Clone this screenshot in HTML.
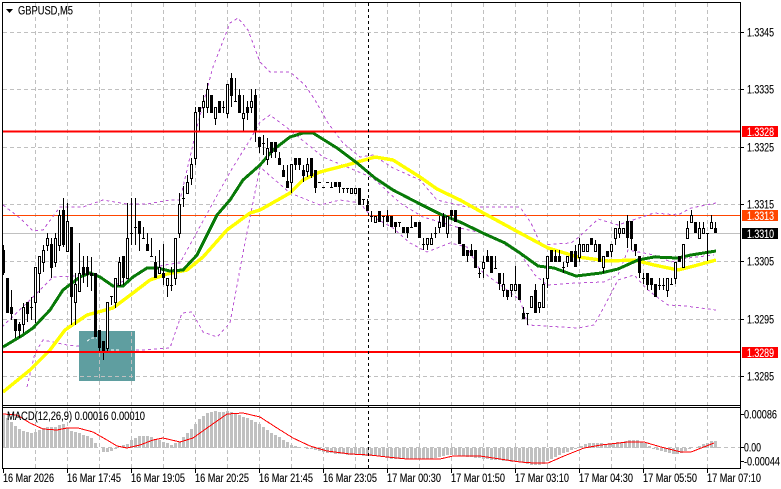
<!DOCTYPE html>
<html><head><meta charset="utf-8"><title>GBPUSD,M5</title>
<style>
html,body{margin:0;padding:0;background:#fff;width:781px;height:489px;overflow:hidden}
svg{display:block}
text{font-family:"Liberation Sans",sans-serif;font-size:11.5px;fill:#000;stroke:#000;stroke-width:.12px}
.w{fill:#fff;stroke:#fff}
.c{shape-rendering:crispEdges}
</style></head><body>
<svg width="781" height="489" viewBox="0 0 781 489" xmlns="http://www.w3.org/2000/svg">
<rect width="781" height="489" fill="#fff"/>
<rect class="c" x="79" y="331" width="56" height="50" fill="#5f9ea0"/>
<!-- grid -->
<g class="c" fill="none" stroke="#c0c0c0" stroke-dasharray="4 3">
<path d="M3 32.5H740M3 89.5H740M3 147.5H740M3 204.5H740M3 261.5H740M3 319.5H740M3 376.5H740M3 447.5H740"/>
<path d="M35.5 3V405M67.5 3V405M99.5 3V405M131.5 3V405M163.5 3V405M195.5 3V405M227.5 3V405M259.5 3V405M291.5 3V405M323.5 3V405M355.5 3V405M387.5 3V405M419.5 3V405M451.5 3V405M483.5 3V405M515.5 3V405M547.5 3V405M579.5 3V405M611.5 3V405M643.5 3V405M675.5 3V405M707.5 3V405"/>
<path d="M35.5 408V468M67.5 408V468M99.5 408V468M131.5 408V468M163.5 408V468M195.5 408V468M227.5 408V468M259.5 408V468M291.5 408V468M323.5 408V468M355.5 408V468M387.5 408V468M419.5 408V468M451.5 408V468M483.5 408V468M515.5 408V468M547.5 408V468M579.5 408V468M611.5 408V468M643.5 408V468M675.5 408V468M707.5 408V468"/>
</g>
<path class="c" d="M3 233.5H740" stroke="#c0c0c0" fill="none"/>
<path class="c" d="M3 215.5H740" stroke="#ff4500" fill="none"/>
<!-- bollinger -->
<g fill="none" stroke="#ba55d3" stroke-dasharray="3 3" class="c">
<path d="M3 205L20 218L33 231L43 230L60 207L83 207L103 200L127 204L147 204L170 200L180 200L197 127L213 67L230 23L238 18L248 30L260 62L270 72L290 72L305 85L315 100L328 123L343 143L360 157L373 155L393 168L420 180L437 200L467 207L520 207L531 223L541 245L571 243L579 237L598 219L618 225L624 223L654 213L678 215L691 208L716 203"/>
<path d="M2 327L33 297L53 277L77 276L95 273L113 285L127 280L150 268L170 264L180 263L220 190L233 167L250 140L260 122L270 115L290 130L323 157L347 167L373 178L400 203L423 217L460 228L490 235L521 255L535 275L547 285L576 283L604 282L618 275L628 250L654 255L671 262L688 258L714 255"/>
<path d="M27 387L35 353L43 340L67 345L79 346M136 350L143 350L170 348L182 313L192 312L203 332L217 337L230 323L243 253L260 167L290 193L320 205L340 200L360 203L370 215L393 228L410 243L427 252L450 243L467 247L480 270L503 287L520 300L528 325L578 328L594 325L604 307L618 280L634 275L648 290L661 300L668 305L685 306L716 310"/>
</g>
<path class="c" d="M87 341L92 338L97 338M111 350L121 350" fill="none" stroke="#fff" stroke-dasharray="3 2"/>
<!-- moving averages -->
<g fill="none" stroke-linejoin="round" class="c">
<polyline stroke="#ffff00" stroke-width="3.4" points="3,392 30,370 50,350 65,330 87,315 113,308 133,293 150,280 167,274 187,270 203,257 227,230 250,213 260,210 290,193 303,180 320,172 347,165 375,157 393,160 420,177 437,189 460,200 487,215 520,233 548,248 578,257 608,261 634,260 654,265 678,270 694,266 716,260"/>
<polyline stroke="#087a08" stroke-width="3" points="3,347 13,341 23,335 33,328 50,310 63,290 80,277 90,273 100,277 113,286 123,286 133,277 147,268 157,268 170,271 183,270 197,255 217,215 230,200 243,180 260,165 273,150 290,137 303,133 313,133 337,148 357,163 375,178 393,190 420,204 440,214 460,222 487,235 505,243 520,253 538,266 554,268 576,276 601,273 618,269 638,260 654,257 678,258 691,255 716,251"/>
</g>
<!-- candle wicks & dojis -->
<path class="c" fill="none" stroke="#000" d="M3.5 245V275M7.5 278V313M11.5 290V320M15.5 319V338M19.5 322V338M23.5 303V333M27.5 302V322M31.5 297V320M35.5 267V323M39.5 256V293M43.5 245V272M47.5 233V251M51.5 238V278M55.5 233V267M59.5 210V251M63.5 198V247M67.5 203V251M71.5 227V325M75.5 273V325M79.5 243V292M83.5 256V283M87.5 256V287M91.5 257V291M95.5 273V337M99.5 330V353M103.5 341V360M107.5 302V353M111.5 296V305M115.5 278V308M119.5 257V285M123.5 256V285M127.5 203V278M131.5 198V245M135.5 198V245M139.5 221V251M143.5 227V238M147.5 233V251M151.5 238V256M155.5 256V278M159.5 250V273M163.5 244V285M167.5 278V297M171.5 267V291M175.5 238V285M179.5 193V238M183.5 186V207M187.5 175V193M191.5 158V185M195.5 107V165M199.5 107V131M203.5 95V118M207.5 83V113M211.5 95V113M215.5 107V125M219.5 101V113M223.5 101V113M227.5 84V118M231.5 73V107M235.5 78V101M239.5 89V113M243.5 95V131M247.5 101V120M251.5 89V113M255.5 89V142M259.5 137V153M263.5 135V155M267.5 138V165M271.5 142V158M275.5 142V158M279.5 152V165M283.5 165V177M287.5 165V188M291.5 164V193M295.5 158V170M299.5 158V170M303.5 165V182M307.5 158V177M311.5 158V178M315.5 170V193M331.5 182V187M339.5 182V193M343.5 188V193M347.5 188V193M351.5 188V193M355.5 188V193M359.5 188V205M363.5 199V205M367.5 199V211M371.5 211V222M375.5 216V222M379.5 211V222M383.5 216V227M387.5 210V222M391.5 216V227M395.5 222V233M399.5 222V227M403.5 227V233M407.5 227V238M411.5 216V227M415.5 222V227M419.5 222V238M423.5 238V250M427.5 238V250M431.5 233V244M435.5 227V238M439.5 216V233M443.5 213V227M447.5 216V238M451.5 210V220M455.5 210V222M459.5 227V244M463.5 244V256M467.5 250V262M471.5 244V256M475.5 250V268M479.5 268V278M483.5 256V278M487.5 250V262M491.5 256V273M495.5 256V268M499.5 273V290M503.5 273V297M507.5 290V300M511.5 284V297M515.5 266V290M519.5 284V300M523.5 307V319M527.5 313V325M531.5 296V307M535.5 284V313M539.5 302V313M543.5 278V307M547.5 256V288M551.5 250V262M555.5 250V262M559.5 250V262M563.5 262V273M567.5 256V267M571.5 251V262M575.5 245V267M579.5 238V262M583.5 244V251M587.5 244V251M591.5 238V245M595.5 240V251M599.5 244V262M603.5 256V273M607.5 251V257M611.5 244V257M615.5 228V245M619.5 221V238M623.5 228V233M627.5 215V248M631.5 221V250M635.5 244V256M639.5 256V278M643.5 273V284M647.5 273V290M651.5 278V290M655.5 284V297M659.5 278V290M663.5 278V290M667.5 278V297M671.5 278V285M675.5 262V284M679.5 256V262M683.5 244V267M687.5 221V238M691.5 210V222M695.5 222V233M699.5 222V238M703.5 222V233M707.5 233V261M711.5 215V228M715.5 222V233"/>
<path class="c" fill="none" stroke="#000" d="M30 307.5h3M110 296.5h3M130 233.5h3M134 227.5h3M142 238.5h3M150 256.5h3M170 285.5h3M182 198.5h3M222 107.5h3M234 101.5h3M262 143.5h3M318 182.5h3M322 187.5h3M326 182.5h3M330 187.5h3M342 188.5h3M346 188.5h3M362 199.5h3M370 216.5h3M382 216.5h3M398 222.5h3M410 227.5h3M422 244.5h3M434 233.5h3M478 273.5h3M494 268.5h3M526 313.5h3M562 267.5h3M642 278.5h3M658 285.5h3M662 285.5h3M670 284.5h3M706 233.5h3"/>
<!-- black bodies -->
<path class="c" fill="none" stroke="#000" stroke-width="3" d="M3.5 250V273M7.5 278V313M11.5 307V314M15.5 319V331M19.5 324V331M27.5 302V314M51.5 244V268M63.5 210V245M71.5 227V297M83.5 267V275M87.5 267V275M91.5 273V276M95.5 273V337M99.5 330V348M103.5 341V353M123.5 256V278M139.5 221V234M147.5 244V251M155.5 262V278M163.5 273V278M199.5 107V112M211.5 95V113M219.5 101V113M231.5 78V96M239.5 95V113M247.5 107V113M255.5 95V131M259.5 137V147M271.5 142V153M275.5 142V152M279.5 158V165M283.5 170V177M287.5 181V188M295.5 158V165M299.5 158V165M303.5 170V176M311.5 158V176M315.5 170V188M335.5 182V187M339.5 182V187M359.5 188V205M367.5 205V211M379.5 211V222M387.5 216V222M391.5 216V227M395.5 222V227M403.5 227V233M407.5 227V233M415.5 222V227M419.5 222V238M443.5 216V227M451.5 210V216M455.5 210V222M459.5 227V244M463.5 244V256M467.5 250V256M471.5 250V256M475.5 250V268M487.5 256V262M491.5 256V273M499.5 273V284M507.5 290V297M519.5 284V300M523.5 313V319M535.5 290V313M551.5 250V262M555.5 256V262M559.5 256V262M571.5 251V262M575.5 251V267M591.5 238V245M599.5 244V262M607.5 251V257M627.5 221V238M631.5 221V239M635.5 244V251M639.5 256V273M647.5 273V285M651.5 278V285M655.5 284V297M679.5 256V262M695.5 222V233M715.5 228V233"/>
<!-- white bodies -->
<path class="c" fill="#fff" stroke="#000" d="M22.5 307.5h2V324.5h-2zM34.5 267.5h2V302.5h-2zM38.5 256.5h2V273.5h-2zM42.5 250.5h2V262.5h-2zM46.5 238.5h2V245.5h-2zM54.5 238.5h2V262.5h-2zM58.5 215.5h2V245.5h-2zM66.5 221.5h2V251.5h-2zM74.5 284.5h2V302.5h-2zM78.5 273.5h2V291.5h-2zM106.5 302.5h2V348.5h-2zM114.5 278.5h2V302.5h-2zM118.5 262.5h2V285.5h-2zM126.5 238.5h2V278.5h-2zM158.5 267.5h2V273.5h-2zM166.5 278.5h2V285.5h-2zM174.5 238.5h2V278.5h-2zM178.5 204.5h2V233.5h-2zM186.5 182.5h2V193.5h-2zM190.5 164.5h2V178.5h-2zM194.5 112.5h2V158.5h-2zM202.5 101.5h2V107.5h-2zM206.5 89.5h2V107.5h-2zM214.5 107.5h2V118.5h-2zM226.5 84.5h2V113.5h-2zM242.5 113.5h2V118.5h-2zM250.5 101.5h2V107.5h-2zM266.5 148.5h2V159.5h-2zM290.5 164.5h2V182.5h-2zM306.5 164.5h2V171.5h-2zM350.5 188.5h2V193.5h-2zM354.5 188.5h2V193.5h-2zM374.5 216.5h2V222.5h-2zM426.5 238.5h2V244.5h-2zM430.5 238.5h2V244.5h-2zM438.5 222.5h2V227.5h-2zM446.5 216.5h2V233.5h-2zM482.5 262.5h2V268.5h-2zM502.5 284.5h2V290.5h-2zM510.5 284.5h2V290.5h-2zM514.5 284.5h2V290.5h-2zM530.5 296.5h2V307.5h-2zM538.5 302.5h2V307.5h-2zM542.5 284.5h2V307.5h-2zM546.5 256.5h2V278.5h-2zM566.5 256.5h2V262.5h-2zM578.5 244.5h2V257.5h-2zM582.5 244.5h2V251.5h-2zM586.5 244.5h2V251.5h-2zM594.5 244.5h2V251.5h-2zM602.5 256.5h2V267.5h-2zM610.5 244.5h2V251.5h-2zM614.5 228.5h2V238.5h-2zM618.5 228.5h2V233.5h-2zM622.5 228.5h2V233.5h-2zM666.5 278.5h2V290.5h-2zM674.5 262.5h2V278.5h-2zM682.5 244.5h2V267.5h-2zM686.5 228.5h2V238.5h-2zM690.5 215.5h2V222.5h-2zM698.5 228.5h2V238.5h-2zM702.5 228.5h2V233.5h-2zM710.5 222.5h2V228.5h-2z"/>
<!-- red levels -->
<path class="c" d="M3 131.5H740M3 352H740" stroke="#ff0000" stroke-width="2" fill="none"/>
<!-- MACD histogram -->
<path class="c" fill="none" stroke="#c0c0c0" stroke-width="3" d="M3.5 415V448M7.5 418V448M11.5 422V448M15.5 426V448M19.5 429V448M23.5 431V448M27.5 432V448M31.5 433V448M35.5 432V448M39.5 430V448M43.5 428V448M47.5 427V448M51.5 427V448M55.5 427V448M59.5 425V448M63.5 424V448M67.5 428V448M71.5 431V448M75.5 432V448M79.5 433V448M83.5 435V448M87.5 436V448M91.5 438V448M95.5 443V448M103.5 448V452M107.5 448V452M111.5 448V451M115.5 448V449M123.5 445V448M127.5 444V448M131.5 440V448M135.5 438V448M139.5 436V448M143.5 436V448M147.5 436V448M151.5 437V448M155.5 439V448M159.5 440V448M163.5 442V448M167.5 443V448M171.5 445V448M175.5 443V448M179.5 442V448M183.5 437V448M187.5 433V448M191.5 429V448M195.5 424V448M199.5 419V448M203.5 416V448M207.5 413V448M211.5 412V448M215.5 411V448M219.5 412V448M223.5 412V448M227.5 411V448M231.5 412V448M235.5 413V448M239.5 415V448M243.5 417V448M247.5 418V448M251.5 420V448M255.5 422V448M259.5 424V448M263.5 427V448M267.5 430V448M271.5 433V448M275.5 435V448M279.5 437V448M283.5 440V448M287.5 442V448M291.5 445V448M295.5 446V448M307.5 448V449M311.5 448V449M315.5 448V450M319.5 448V451M323.5 448V452M327.5 448V453M331.5 448V453M335.5 448V454M339.5 448V454M343.5 448V454M347.5 448V455M351.5 448V455M355.5 448V455M359.5 448V455M363.5 448V456M367.5 448V456M371.5 448V456M375.5 448V456M379.5 448V456M383.5 448V457M387.5 448V458M391.5 448V459M395.5 448V459M399.5 448V459M403.5 448V459M407.5 448V459M411.5 448V459M415.5 448V459M419.5 448V459M423.5 448V459M427.5 448V459M431.5 448V459M435.5 448V458M439.5 448V457M443.5 448V456M447.5 448V455M451.5 448V455M455.5 448V455M459.5 448V456M463.5 448V456M467.5 448V457M471.5 448V457M475.5 448V458M479.5 448V458M483.5 448V459M487.5 448V459M491.5 448V460M495.5 448V460M499.5 448V460M503.5 448V461M507.5 448V461M511.5 448V462M515.5 448V462M519.5 448V462M523.5 448V463M527.5 448V464M531.5 448V465M535.5 448V465M539.5 448V465M543.5 448V464M547.5 448V461M551.5 448V459M555.5 448V457M559.5 448V455M563.5 448V453M567.5 448V452M571.5 448V450M575.5 448V449M581.5 446V448M585.5 444V448M589.5 443V448M593.5 443V448M597.5 443V448M601.5 443V448M605.5 444V448M609.5 443V448M613.5 443V448M617.5 442V448M621.5 442V448M625.5 441V448M629.5 440V448M633.5 440V448M637.5 440V448M641.5 442V448M645.5 443V448M649.5 446V448M653.5 448V449M657.5 448V450M661.5 448V451M665.5 448V452M669.5 448V453M673.5 448V454M677.5 448V454M681.5 448V453M685.5 448V451M689.5 448V449M699.5 446V448M703.5 444V448M707.5 443V448M711.5 441V448M715.5 441V448"/>
<polyline class="c" fill="none" stroke="#ff0000" points="3,414 17,415 30,423 43,429 57,430 67,428 78,428 93,432 107,440 117,446 127,448 140,445 153,440 163,438 180,442 193,438 207,428 227,414 243,413 260,417 277,428 293,438 310,446 327,451 350,454 370,455 387,457 407,459 440,459 453,456 480,456 500,459 520,462 534,463 548,463 564,456 584,448 601,445 628,442 644,442 661,447 681,452 691,452 714,443"/>
<!-- frame -->
<path class="c" fill="none" stroke="#000" d="M2.5 2.5H740.5V468.5H2.5ZM2 405.5H741M2 407.5H741"/>
<path class="c" fill="none" stroke="#000" stroke-dasharray="3 3" d="M368.5 3V468"/>
<!-- ticks -->
<path class="c" fill="none" stroke="#000" d="M741 32.5h3M741 89.5h3M741 147.5h3M741 204.5h3M741 261.5h3M741 319.5h3M741 376.5h3M741 414.5h3M741 447.5h3M741 461.5h3M3.5 469v4M67.5 469v4M131.5 469v4M195.5 469v4M259.5 469v4M323.5 469v4M387.5 469v4M451.5 469v4M515.5 469v4M579.5 469v4M643.5 469v4M707.5 469v4"/>
<!-- title -->
<path d="M6 9h7l-3.5 4z" fill="#000"/>
<text x="18" y="14.500" textLength="55" lengthAdjust="spacingAndGlyphs">GBPUSD,M5</text>
<text x="7" y="420" textLength="138" lengthAdjust="spacingAndGlyphs">MACD(12,26,9) 0.00016 0.00010</text>
<!-- price axis -->
<g>
<text x="747" y="36.500" textLength="27" lengthAdjust="spacingAndGlyphs">1.3345</text>
<text x="747" y="93.500" textLength="27" lengthAdjust="spacingAndGlyphs">1.3335</text>
<text x="747" y="151.500" textLength="27" lengthAdjust="spacingAndGlyphs">1.3325</text>
<text x="747" y="208.500" textLength="27" lengthAdjust="spacingAndGlyphs">1.3315</text>
<text x="747" y="265.500" textLength="27" lengthAdjust="spacingAndGlyphs">1.3305</text>
<text x="747" y="323.500" textLength="27" lengthAdjust="spacingAndGlyphs">1.3295</text>
<text x="747" y="380.500" textLength="27" lengthAdjust="spacingAndGlyphs">1.3285</text>
<text x="744" y="418.500" textLength="33" lengthAdjust="spacingAndGlyphs">0.00086</text>
<text x="744" y="451.500" textLength="17" lengthAdjust="spacingAndGlyphs">0.00</text>
<text x="744" y="465.500" textLength="36" lengthAdjust="spacingAndGlyphs">-0.00044</text>
</g>
<rect class="c" x="742" y="126" width="36" height="11" fill="#ff0000"/>
<text class="w" x="747" y="135.800" textLength="27" lengthAdjust="spacingAndGlyphs">1.3328</text>
<rect class="c" x="742" y="210" width="36" height="11" fill="#ff4500"/>
<text class="w" x="747" y="219.800" textLength="27" lengthAdjust="spacingAndGlyphs">1.3313</text>
<rect class="c" x="742" y="228" width="36" height="11" fill="#000"/>
<text class="w" x="747" y="237.800" textLength="27" lengthAdjust="spacingAndGlyphs">1.3310</text>
<rect class="c" x="742" y="347" width="36" height="11" fill="#ff0000"/>
<text class="w" x="747" y="356.800" textLength="27" lengthAdjust="spacingAndGlyphs">1.3289</text>
<!-- time axis -->
<g>
<text x="3" y="482" textLength="51" lengthAdjust="spacingAndGlyphs">16 Mar 2026</text>
<text x="67" y="482" textLength="54" lengthAdjust="spacingAndGlyphs">16 Mar 17:45</text>
<text x="131" y="482" textLength="54" lengthAdjust="spacingAndGlyphs">16 Mar 19:05</text>
<text x="195" y="482" textLength="54" lengthAdjust="spacingAndGlyphs">16 Mar 20:25</text>
<text x="259" y="482" textLength="54" lengthAdjust="spacingAndGlyphs">16 Mar 21:45</text>
<text x="323" y="482" textLength="54" lengthAdjust="spacingAndGlyphs">16 Mar 23:05</text>
<text x="387" y="482" textLength="54" lengthAdjust="spacingAndGlyphs">17 Mar 00:30</text>
<text x="451" y="482" textLength="54" lengthAdjust="spacingAndGlyphs">17 Mar 01:50</text>
<text x="515" y="482" textLength="54" lengthAdjust="spacingAndGlyphs">17 Mar 03:10</text>
<text x="579" y="482" textLength="54" lengthAdjust="spacingAndGlyphs">17 Mar 04:30</text>
<text x="643" y="482" textLength="54" lengthAdjust="spacingAndGlyphs">17 Mar 05:50</text>
<text x="707" y="482" textLength="54" lengthAdjust="spacingAndGlyphs">17 Mar 07:10</text>
</g>
</svg>
</body></html>
